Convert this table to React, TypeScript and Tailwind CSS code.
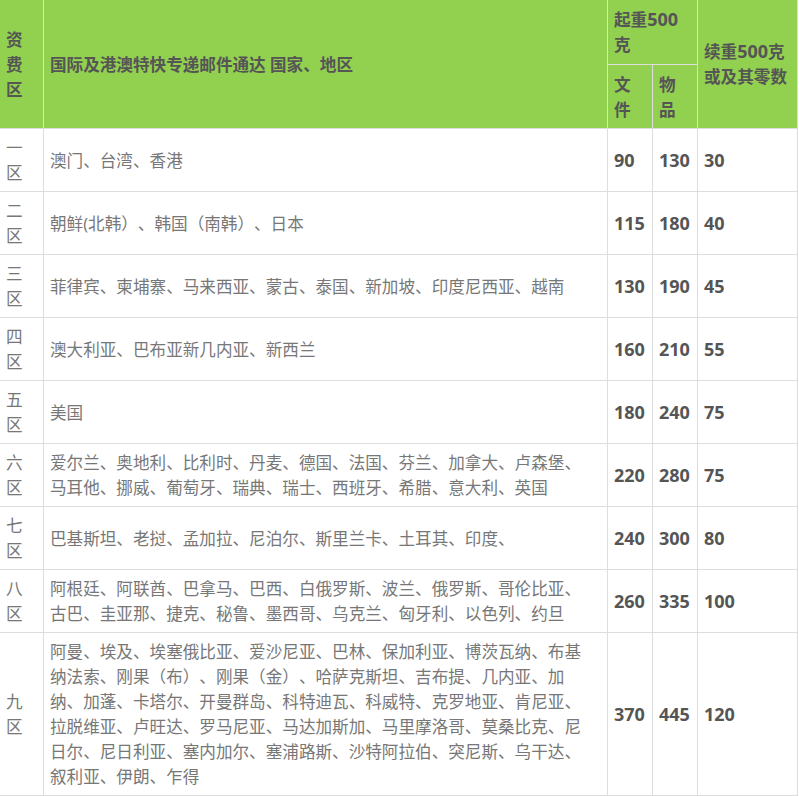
import React from 'react';

// 资费表数据
const rows = [
  { zone: '一区', areas: '澳门、台湾、香港', doc: 90, goods: 130, extra: 30 },
  { zone: '二区', areas: '朝鲜(北韩）、韩国（南韩）、日本', doc: 115, goods: 180, extra: 40 },
  { zone: '三区', areas: '菲律宾、柬埔寨、马来西亚、蒙古、泰国、新加坡、印度尼西亚、越南', doc: 130, goods: 190, extra: 45 },
  { zone: '四区', areas: '澳大利亚、巴布亚新几内亚、新西兰', doc: 160, goods: 210, extra: 55 },
  { zone: '五区', areas: '美国', doc: 180, goods: 240, extra: 75 },
  {
    zone: '六区',
    areas: '爱尔兰、奥地利、比利时、丹麦、德国、法国、芬兰、加拿大、卢森堡、马耳他、挪威、葡萄牙、瑞典、瑞士、西班牙、希腊、意大利、英国',
    doc: 220,
    goods: 280,
    extra: 75,
  },
  { zone: '七区', areas: '巴基斯坦、老挝、孟加拉、尼泊尔、斯里兰卡、土耳其、印度、', doc: 240, goods: 300, extra: 80 },
  {
    zone: '八区',
    areas: '阿根廷、阿联酋、巴拿马、巴西、白俄罗斯、波兰、俄罗斯、哥伦比亚、古巴、圭亚那、捷克、秘鲁、墨西哥、乌克兰、匈牙利、以色列、约旦',
    doc: 260,
    goods: 335,
    extra: 100,
  },
  {
    zone: '九区',
    areas:
      '阿曼、埃及、埃塞俄比亚、爱沙尼亚、巴林、保加利亚、博茨瓦纳、布基纳法索、刚果（布）、刚果（金）、哈萨克斯坦、吉布提、几内亚、加纳、加蓬、卡塔尔、开曼群岛、科特迪瓦、科威特、克罗地亚、肯尼亚、拉脱维亚、卢旺达、罗马尼亚、马达加斯加、马里摩洛哥、莫桑比克、尼日尔、尼日利亚、塞内加尔、塞浦路斯、沙特阿拉伯、突尼斯、乌干达、叙利亚、伊朗、乍得',
    doc: 370,
    goods: 445,
    extra: 120,
  },
];

const cell = 'border border-[#dddddd] px-[6px] py-[6px] align-middle';
const head = 'border border-[#dddddd] px-[6px] align-middle text-left';
const num = 'text-[18px] font-bold text-[#555555]';

export default function App() {
  return (
    <div className="bg-white w-[799px] h-[796px] overflow-hidden">
      <table
        className="table-fixed border-collapse w-[798px] -ml-px -mt-px text-[16.6px] leading-[25px] text-[#777777] [text-spacing-trim:space-all]"
        style={{ fontFamily: '"Open Sans", "Noto Sans CJK SC", sans-serif' }}
      >
        <colgroup>
          <col className="w-[44px]" />
          <col className="w-[564px]" />
          <col className="w-[45px]" />
          <col className="w-[45px]" />
          <col className="w-[100px]" />
        </colgroup>
        <thead>
          <tr className="bg-[#92d050] text-[#555555] font-bold">
            <th rowSpan={2} className={head}>资费区</th>
            <th rowSpan={2} className={head}>国际及港澳特快专递邮件通达 国家、地区</th>
            <th colSpan={2} className={`${head} pt-[7px] pb-[7px]`}>
              起重<span className="text-[18px]">500</span>克
            </th>
            <th rowSpan={2} className={head}>
              续重<span className="text-[18px]">500</span>克或及其零数
            </th>
          </tr>
          <tr className="bg-[#92d050] text-[#555555] font-bold">
            <th className={`${head} pt-[7px] pb-[6px]`}>文件</th>
            <th className={`${head} pt-[7px] pb-[6px]`}>物品</th>
          </tr>
        </thead>
        <tbody>
          {rows.map((row) => (
            <tr key={row.zone}>
              <td className={cell}>{row.zone}</td>
              <td className={`${cell} pr-[12px]`}>{row.areas}</td>
              <td className={`${cell} ${num}`}>{row.doc}</td>
              <td className={`${cell} ${num}`}>{row.goods}</td>
              <td className={`${cell} ${num}`}>{row.extra}</td>
            </tr>
          ))}
        </tbody>
      </table>
    </div>
  );
}
